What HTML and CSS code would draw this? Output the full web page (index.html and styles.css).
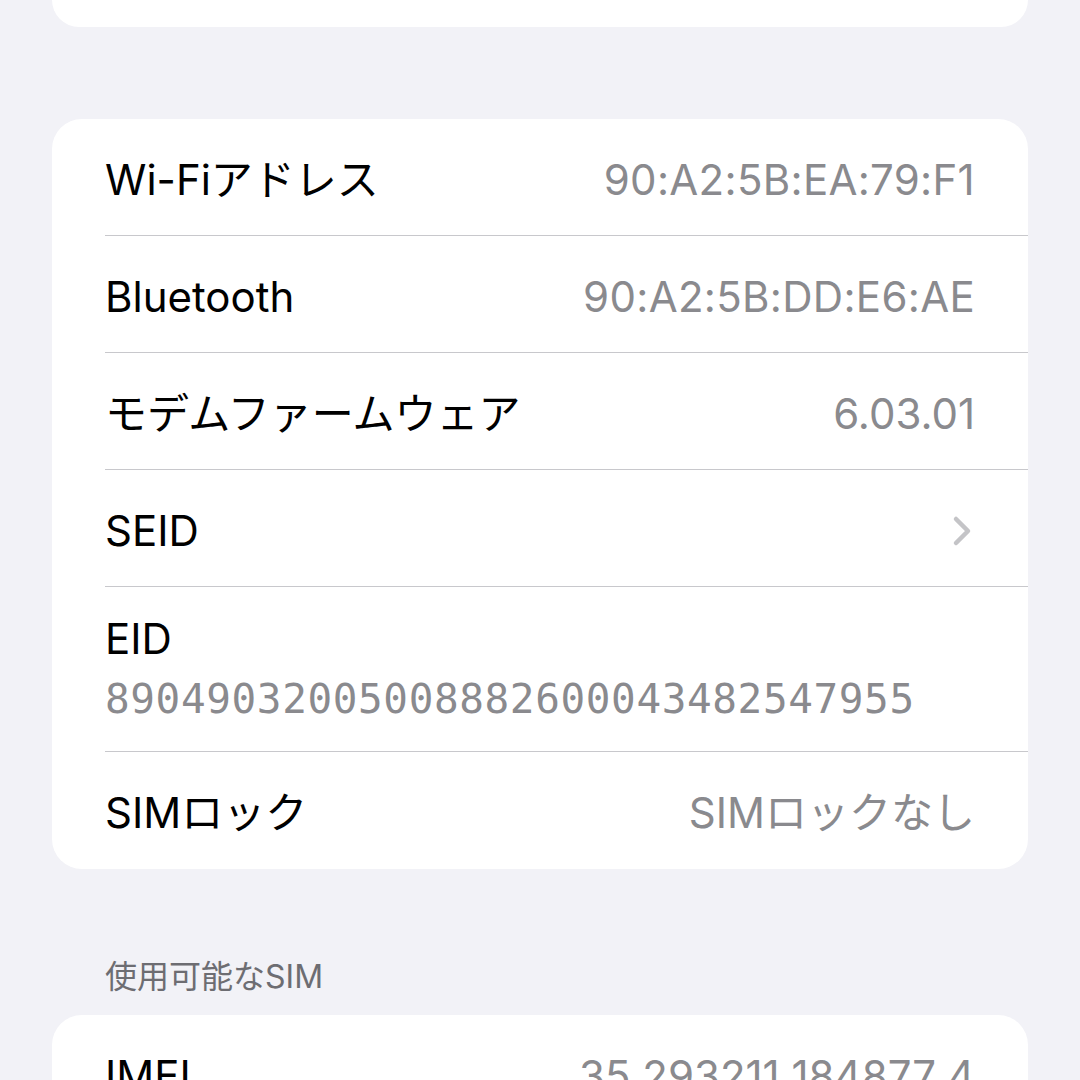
FILE: index.html
```html
<!DOCTYPE html>
<html lang="ja">
<head>
    <meta charset="UTF-8">
    <meta name="viewport" content="width=device-width, initial-scale=1.0">
    <title>情報</title>
    <link rel="stylesheet" href="styles.css">
</head>
<body>
    <div class="pantalla">
        <div class="tarjeta tarjeta-cortada"></div>

        <div class="tarjeta tarjeta-info">
            <div class="fila">
                <span class="etiqueta">Wi-Fiアドレス</span>
                <span class="valor mac">90:A2:5B:EA:79:F1</span>
            </div>
            <div class="fila">
                <span class="etiqueta">Bluetooth</span>
                <span class="valor mac">90:A2:5B:DD:E6:AE</span>
            </div>
            <div class="fila">
                <span class="etiqueta">モデムファームウェア</span>
                <span class="valor">6.03.01</span>
            </div>
            <div class="fila">
                <span class="etiqueta">SEID</span>
                <svg class="flecha" width="20" height="32" viewBox="0 0 20 32">
                    <path d="M4 4 L16 16 L4 28" fill="none" stroke="#c4c4c7" stroke-width="4.5" stroke-linecap="round" stroke-linejoin="round"/>
                </svg>
            </div>
            <div class="fila fila-doble">
                <span class="etiqueta">EID</span>
                <span class="valor mono">89049032005008882600043482547955</span>
            </div>
            <div class="fila">
                <span class="etiqueta">SIMロック</span>
                <span class="valor">SIMロックなし</span>
            </div>
        </div>

        <div class="seccion">使用可能なSIM</div>

        <div class="tarjeta tarjeta-info">
            <div class="fila">
                <span class="etiqueta">IMEI</span>
                <span class="valor">35 293211 184877 4</span>
            </div>
        </div>
    </div>
</body>
</html>
```

FILE: styles.css
```css
* {
    box-sizing: border-box;
}

body {
    margin: 0;
    background: #f2f2f7;
    font-family: "Inter", "Noto Sans CJK JP", sans-serif;
    color: #000;
    overflow: hidden;
    height: 1080px;
}

.pantalla {
    padding: 0 52px;
}

.tarjeta {
    background: #fff;
    border-radius: 30px;
}

.tarjeta-cortada {
    height: 27px;
    border-radius: 0 0 30px 30px;
    margin-bottom: 92px;
}

.tarjeta-info {
    padding-left: 53px;
}

.fila {
    display: flex;
    align-items: center;
    justify-content: space-between;
    height: 117px;
    padding: 5px 53px 0 0;
    border-bottom: 1.5px solid #c8c8cc;
}

.fila:last-child {
    border-bottom: none;
}

.fila-doble {
    flex-direction: column;
    align-items: flex-start;
    justify-content: flex-start;
    height: 165px;
    padding: 26px 0 0;
    gap: 8px;
}

.etiqueta {
    font-size: 42px;
    line-height: 52px;
}

.valor {
    font-size: 42px;
    line-height: 52px;
    color: #8a8a8e;
}

.mac {
    letter-spacing: 0.3px;
}

.mono {
    font-family: "DejaVu Sans Mono", monospace;
    font-size: 41px;
    letter-spacing: 0.62px;
}

.flecha {
    margin-right: 3px;
}

.seccion {
    margin: 86px 0 0 53px;
    font-size: 32px;
    line-height: 44px;
    color: #6d6d72;
    height: 60px;
}
```
